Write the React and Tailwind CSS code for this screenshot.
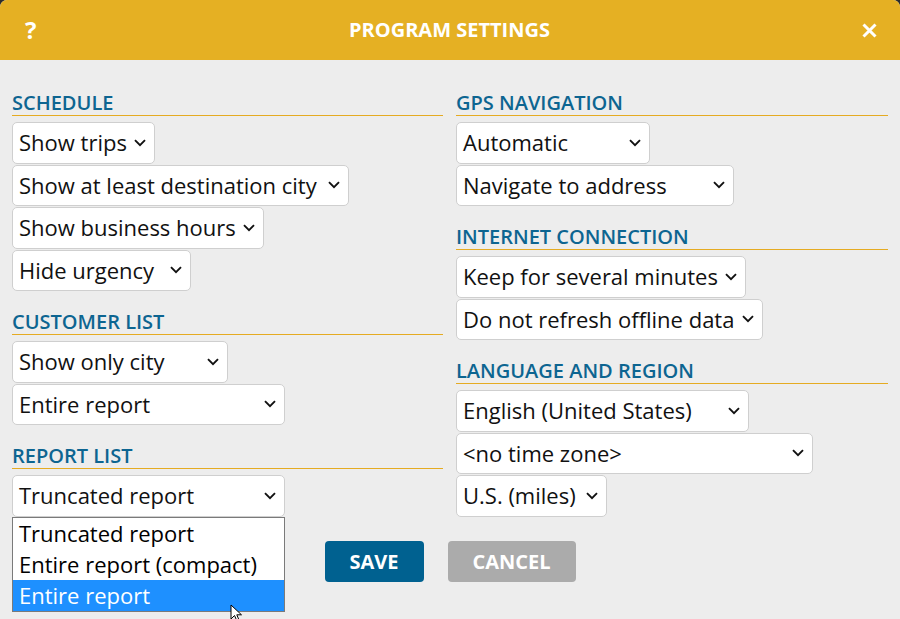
import React from 'react';

const Chevron = () => (
    <svg width="12" height="8" viewBox="0 0 12 8" className="shrink-0">
        <path d="M1 1.2 L6 6.2 L11 1.2" fill="none" stroke="#111" strokeWidth="1.9" />
    </svg>
);

const Select = ({ value, width, children }) => (
    <div
        className="relative h-[41.5px] bg-white border border-[#cfcfcf] rounded-[5px] flex items-center justify-between pl-[6px] pr-[8px] text-[22px] text-[#111] whitespace-nowrap"
        style={{ width }}
    >
        <span>{value}</span>
        <Chevron />
        {children}
    </div>
);

const Section = ({ title, children }) => (
    <section>
        <h2 className="text-[20px] font-semibold text-[#0d6591] leading-[24px]">{title}</h2>
        <div className="h-px bg-[#e5ab22] mb-[6px]" />
        <div className="flex flex-col gap-[1px]">{children}</div>
    </section>
);

const App = () => {
    return (
        <div className="w-[900px] h-[619px] bg-[#2b2b2b] overflow-hidden" style={{ fontFamily: '"Open Sans", "Liberation Sans", sans-serif' }}>
            <div className="w-full h-full bg-[#ededed] rounded-t-[7px] overflow-hidden flex flex-col">
                <header className="h-[60px] bg-[#e5b023] flex items-center pl-[25px] pr-[22px] text-white font-bold shrink-0">
                    <span className="text-[24px] w-[20px]">?</span>
                    <span className="flex-1 text-center text-[20px]">PROGRAM SETTINGS</span>
                    <span className="w-[24px] flex justify-end">
                        <svg width="17" height="17" viewBox="0 0 17 17">
                            <path d="M2.5 2.5 L14.5 14.5 M14.5 2.5 L2.5 14.5" stroke="white" strokeWidth="3" />
                        </svg>
                    </span>
                </header>

                <div className="grid grid-cols-[431px_1fr] gap-x-[13px] px-3 pt-[31px]">
                    <div className="flex flex-col gap-[19px]">
                        <Section title="SCHEDULE">
                            <Select value="Show trips" width={143} />
                            <Select value="Show at least destination city" width={337} />
                            <Select value="Show business hours" width={252} />
                            <Select value="Hide urgency" width={179} />
                        </Section>
                        <Section title="CUSTOMER LIST">
                            <Select value="Show only city" width={216} />
                            <Select value="Entire report" width={273} />
                        </Section>
                        <Section title="REPORT LIST">
                            <Select value="Truncated report" width={273}>
                                <div className="absolute -left-px top-[40.5px] w-[273px] bg-white border border-[#7a7a7a] text-[22px] leading-[31px] text-black z-10">
                                    <div className="px-[6px]">Truncated report</div>
                                    <div className="px-[6px]">Entire report (compact)</div>
                                    <div className="px-[6px] bg-[#1e90ff] text-white">Entire report</div>
                                </div>
                                <svg width="14" height="20" viewBox="0 0 14 20" className="absolute left-[217px] top-[128px] z-20">
                                    <path d="M1 1 L1 15 L4.5 11.5 L7 17 L9 16 L6.8 10.8 L11.5 10.8 Z" fill="white" stroke="black" strokeWidth="1" />
                                </svg>
                            </Select>
                        </Section>
                    </div>
                    <div className="flex flex-col gap-[19px]">
                        <Section title="GPS NAVIGATION">
                            <Select value="Automatic" width={194} />
                            <Select value="Navigate to address" width={278} />
                        </Section>
                        <Section title="INTERNET CONNECTION">
                            <Select value="Keep for several minutes" width={290} />
                            <Select value="Do not refresh offline data" width={307} />
                        </Section>
                        <Section title="LANGUAGE AND REGION">
                            <Select value="English (United States)" width={293} />
                            <Select value="<no time zone>" width={357} />
                            <Select value="U.S. (miles)" width={151} />
                        </Section>
                    </div>
                </div>

                <div className="flex justify-center gap-6 mt-[24.5px]">
                    <button className="w-[99px] h-[41px] bg-[#006190] text-white font-bold text-[20px] rounded-[4px]">SAVE</button>
                    <button className="w-[128px] h-[41px] bg-[#ababab] text-white font-bold text-[20px] rounded-[4px]">CANCEL</button>
                </div>
            </div>
        </div>
    );
};

export default App;
